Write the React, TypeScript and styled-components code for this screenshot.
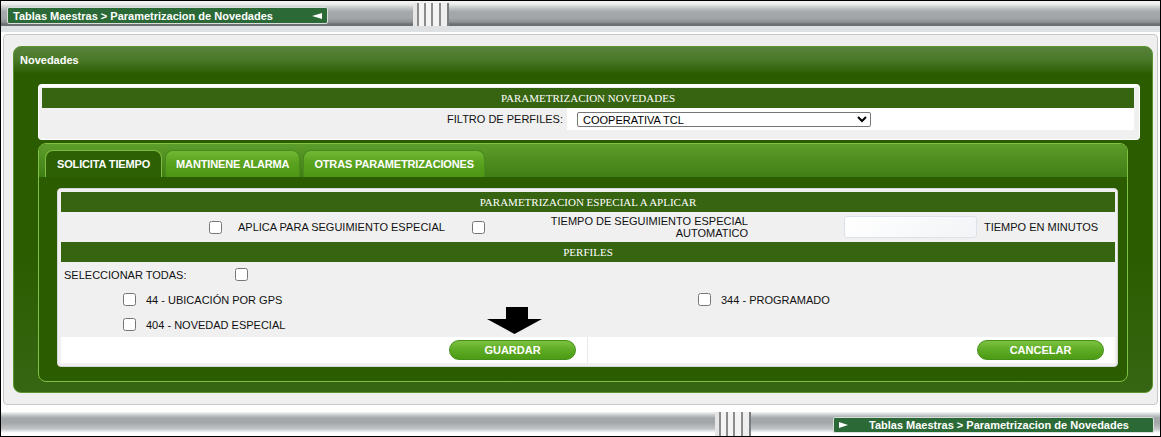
import React from "react";
import styled, { createGlobalStyle } from "styled-components";

const GlobalStyle = createGlobalStyle`
  html, body {
    margin: 0;
    padding: 0;
    background: #fff;
  }
  body {
    font-family: "Liberation Sans", Arial, sans-serif;
    font-size: 11px;
    color: #111;
  }
  * {
    box-sizing: border-box;
  }
`;

const Frame = styled.div`
  width: 1161px;
  height: 437px;
  border: 1px solid #000;
  background: #fff;
  display: flex;
  flex-direction: column;
  overflow: hidden;
`;

const TopBar = styled.div`
  flex: none;
  height: 31px;
  display: flex;
  align-items: flex-start;
  background: linear-gradient(
    to bottom,
    #f5f5f5 0px,
    #ededed 3px,
    #b8bcbe 8px,
    #a4a8aa 11px,
    #a2a6a8 17px,
    #8e9294 21px,
    #6c7072 23px,
    #6c7072 25px,
    #dde1e3 25px,
    #dde1e3 31px
  );
`;

const BottomBar = styled.div`
  flex: none;
  height: 24px;
  display: flex;
  justify-content: flex-end;
  align-items: flex-start;
  background: linear-gradient(
    to bottom,
    #f4f4f4 0px,
    #c8cbcd 3px,
    #a4a8aa 6px,
    #a4a8aa 11px,
    #c2c5c7 17px,
    #e4e6e7 19px,
    #ffffff 21px,
    #ffffff 24px
  );
`;

const Crumb = styled.div<{ $reverse?: boolean }>`
  width: 321px;
  height: ${(p) => (p.$reverse ? 16 : 17)}px;
  margin: ${(p) => (p.$reverse ? "5px 6px 0 82px" : "6px 0 0 6px")};
  padding: ${(p) => (p.$reverse ? "0 0 0 5px" : "0 5px 0 5px")};
  display: flex;
  flex-direction: ${(p) => (p.$reverse ? "row-reverse" : "row")};
  justify-content: ${(p) => (p.$reverse ? "flex-end" : "space-between")};
  align-items: center;
  gap: 21px;
  background: #2b6a36;
  border: 1px solid #d9dedb;
  border-radius: 2px;
  color: #fff;
  font-weight: bold;
  font-size: 11px;
  white-space: nowrap;
`;

const CrumbArrow = styled.span<{ $right?: boolean }>`
  width: 0;
  height: 0;
  border-top: 3px solid transparent;
  border-bottom: 3px solid transparent;
  ${(p) =>
    p.$right
      ? "border-left: 9px solid #fff;"
      : "border-right: 10px solid #fff;"}
`;

const Grip = styled.div<{ $bottom?: boolean }>`
  width: 36px;
  height: ${(p) => (p.$bottom ? 24 : 23)}px;
  margin: ${(p) => (p.$bottom ? "0" : "2px 0 0 85px")};
  flex: none;
  background: linear-gradient(
    to right,
    #e6e6e6 0 4px,
    #8a8c8e 4px 6px,
    #f4f4f4 6px 11px,
    #8a8c8e 11px 13px,
    #f4f4f4 13px 18px,
    #8a8c8e 18px 20px,
    #f4f4f4 20px 26px,
    #8a8c8e 26px 28px,
    #eeeeee 28px 34px,
    #7a7e80 34px 36px
  );
`;

const Shell = styled.div`
  flex: none;
  height: 371px;
  margin: 2px 2px 7px 2px;
  padding: 11px 4px 11px 9px;
  background: #efefef;
  border: 1px solid #c8c8c8;
  border-radius: 4px;
`;

const GreenPanel = styled.div`
  height: 347px;
  border: 1px solid #5b9530;
  border-radius: 8px;
  background: linear-gradient(
    to bottom,
    #57823a 0px,
    #4b7a2a 12px,
    #2b5c00 27px,
    #2b5c00 60%,
    #366612 100%
  );
  display: flex;
  flex-direction: column;
`;

const PanelTitle = styled.div`
  height: 37px;
  padding: 7px 0 0 6px;
  line-height: 13px;
  color: #fff;
  font-weight: bold;
  font-size: 11px;
`;

const ParamBox = styled.div`
  height: 56px;
  margin: 0 12px 0 24px;
  padding: 1px 5px 9px 3px;
  background: #f0f0f0;
  border: 1px solid #fff;
  border-top-width: 3px;
  border-radius: 4px;
`;

const SectionHeader = styled.div`
  height: 20px;
  background: #366410;
  color: #fff;
  font-family: "Liberation Serif", "Times New Roman", serif;
  font-size: 11px;
  display: flex;
  align-items: center;
  justify-content: center;
`;

const FilterRow = styled.div`
  height: 22px;
  display: grid;
  grid-template-columns: 525px 1fr;
`;

const FilterLabel = styled.div`
  display: flex;
  align-items: center;
  justify-content: flex-end;
  padding-right: 4px;
  background: #f0f0f0;
`;

const FilterValue = styled.div`
  display: flex;
  align-items: center;
  padding-left: 10px;
  background: #fff;
`;

const Select = styled.select`
  width: 294px;
  height: 15px;
  padding: 0 0 0 1px;
  font-family: "Liberation Sans", Arial, sans-serif;
  font-size: 11px;
  color: #000;
  background: #fff;
  border: 1px solid #767676;
  border-radius: 2px;
`;

const TabFrame = styled.div`
  height: 239px;
  margin: 3px 24px 0 24px;
  border: 1px solid #80c043;
  border-radius: 8px;
  overflow: hidden;
  background: #2b5c00;
  display: flex;
  flex-direction: column;
`;

const TabStrip = styled.div`
  height: 33px;
  flex: none;
  padding: 6px 0 0 6px;
  display: flex;
  align-items: flex-end;
  gap: 3px;
  background: linear-gradient(to bottom, #5c9d2b, #3f7e15);
`;

const Tab = styled.div<{ $active?: boolean }>`
  height: 27px;
  padding: 0 ${(p) => (p.$active ? 11 : 10)}px;
  display: flex;
  align-items: center;
  color: #fff;
  font-weight: bold;
  font-size: 11px;
  letter-spacing: -0.15px;
  white-space: nowrap;
  border-radius: 8px 8px 0 0;
  border: 1px solid ${(p) => (p.$active ? "#7cbd3e" : "#4a8a1c")};
  border-bottom: none;
  background: ${(p) =>
    p.$active
      ? "#2d5f04"
      : "linear-gradient(to bottom, #72b834 0%, #5aa31f 45%, #4c9614 100%)"};
`;

const TabBody = styled.div`
  flex: 1;
  padding: 11px 9px 14px 18px;
`;

const InnerPanel = styled.div`
  height: 179px;
  padding: 3px 2px 3px 3px;
  background: #f0f0f0;
  border: 1px solid #d6d6d6;
  border-radius: 4px;
`;

const FormTable = styled.div`
  position: relative;
  display: flex;
  flex-direction: column;
`;

const SpecialRow = styled.div`
  height: 30px;
  display: grid;
  grid-template-columns: 148px 24px 239px 24px 258px 90px 133px 1fr;
  align-items: center;
`;

const Cell = styled.div<{ $align?: "left" | "right"; $pad?: number }>`
  text-align: ${(p) => p.$align ?? "left"};
  line-height: 12px;
  padding-left: ${(p) => (p.$align === "right" ? 0 : p.$pad ?? 5)}px;
  padding-right: ${(p) => (p.$align === "right" ? 6 : 0)}px;
`;

const Check = styled.input.attrs({ type: "checkbox" })`
  margin: 0;
  width: 13px;
  height: 13px;
`;

const TimeInput = styled.input`
  width: 133px;
  height: 22px;
  border: 1px solid #dce2e9;
  border-radius: 3px;
  background: linear-gradient(135deg, #ffffff, #f2f4f7);
  outline: none;
`;

const SelectAllRow = styled.div`
  height: 25px;
  display: grid;
  grid-template-columns: 171px 1fr;
  align-items: center;
  padding-left: 3px;
`;

const ProfileRow = styled.div`
  height: 25px;
  display: grid;
  grid-template-columns: 575px 1fr;
  align-items: center;
  padding-left: 62px;
`;

const ProfileItem = styled.label`
  display: flex;
  align-items: center;
  gap: 10px;
`;

const ButtonRow = styled.div`
  height: 26px;
  display: grid;
  grid-template-columns: 1fr 1fr;
  background: #fff;
`;

const ButtonCell = styled.div<{ $divider?: boolean }>`
  display: flex;
  align-items: center;
  justify-content: flex-end;
  padding-right: 11px;
  border-right: ${(p) => (p.$divider ? "1px solid #e8e8e8" : "none")};
`;

const GreenButton = styled.button`
  width: 127px;
  height: 20px;
  padding: 0;
  border: 1px solid #43901a;
  border-radius: 10px;
  background: linear-gradient(to bottom, #7bc23f 0%, #5eab24 50%, #4c9b14 100%);
  color: #fff;
  font-family: "Liberation Sans", Arial, sans-serif;
  font-weight: bold;
  font-size: 11px;
`;

const PointerArrow = styled.svg`
  position: absolute;
  left: 426px;
  top: 115px;
`;

const profiles = [
  ["44 - UBICACIÓN POR GPS", "344 - PROGRAMADO"],
  ["404 - NOVEDAD ESPECIAL", ""],
];

const App = () => {
  return (
    <Frame>
      <GlobalStyle />
      <TopBar>
        <Crumb>
          <span>Tablas Maestras &gt; Parametrizacion de Novedades</span>
          <CrumbArrow />
        </Crumb>
        <Grip />
      </TopBar>

      <Shell>
        <GreenPanel>
          <PanelTitle>Novedades</PanelTitle>

          <ParamBox>
            <SectionHeader>PARAMETRIZACION NOVEDADES</SectionHeader>
            <FilterRow>
              <FilterLabel>FILTRO DE PERFILES:</FilterLabel>
              <FilterValue>
                <Select defaultValue="tcl">
                  <option value="tcl">COOPERATIVA TCL</option>
                </Select>
              </FilterValue>
            </FilterRow>
          </ParamBox>

          <TabFrame>
            <TabStrip>
              <Tab $active>SOLICITA TIEMPO</Tab>
              <Tab>MANTINENE ALARMA</Tab>
              <Tab>OTRAS PARAMETRIZACIONES</Tab>
            </TabStrip>
            <TabBody>
              <InnerPanel>
                <FormTable>
                  <SectionHeader>PARAMETRIZACION ESPECIAL A APLICAR</SectionHeader>
                  <SpecialRow>
                    <div />
                    <Check />
                    <Cell>APLICA PARA SEGUIMIENTO ESPECIAL</Cell>
                    <Check />
                    <Cell $align="right">
                      TIEMPO DE SEGUIMIENTO ESPECIAL
                      <br />
                      AUTOMATICO
                    </Cell>
                    <div />
                    <TimeInput />
                    <Cell $pad={7}>TIEMPO EN MINUTOS</Cell>
                  </SpecialRow>

                  <SectionHeader>PERFILES</SectionHeader>
                  <SelectAllRow>
                    <span>SELECCIONAR TODAS:</span>
                    <Check />
                  </SelectAllRow>
                  {profiles.map((row, i) => (
                    <ProfileRow key={i}>
                      {row.map((name, j) =>
                        name ? (
                          <ProfileItem key={j}>
                            <Check />
                            <span>{name}</span>
                          </ProfileItem>
                        ) : (
                          <div key={j} />
                        )
                      )}
                    </ProfileRow>
                  ))}

                  <ButtonRow>
                    <ButtonCell $divider>
                      <GreenButton>GUARDAR</GreenButton>
                    </ButtonCell>
                    <ButtonCell>
                      <GreenButton>CANCELAR</GreenButton>
                    </ButtonCell>
                  </ButtonRow>

                  <PointerArrow width="55" height="27" viewBox="0 0 55 27">
                    <polygon points="19,0 41,0 41,12 55,12 27.5,27 0,12 19,12" fill="#000" />
                  </PointerArrow>
                </FormTable>
              </InnerPanel>
            </TabBody>
          </TabFrame>
        </GreenPanel>
      </Shell>

      <BottomBar>
        <Grip $bottom />
        <Crumb $reverse>
          <span>Tablas Maestras &gt; Parametrizacion de Novedades</span>
          <CrumbArrow $right />
        </Crumb>
      </BottomBar>
    </Frame>
  );
};

export default App;
